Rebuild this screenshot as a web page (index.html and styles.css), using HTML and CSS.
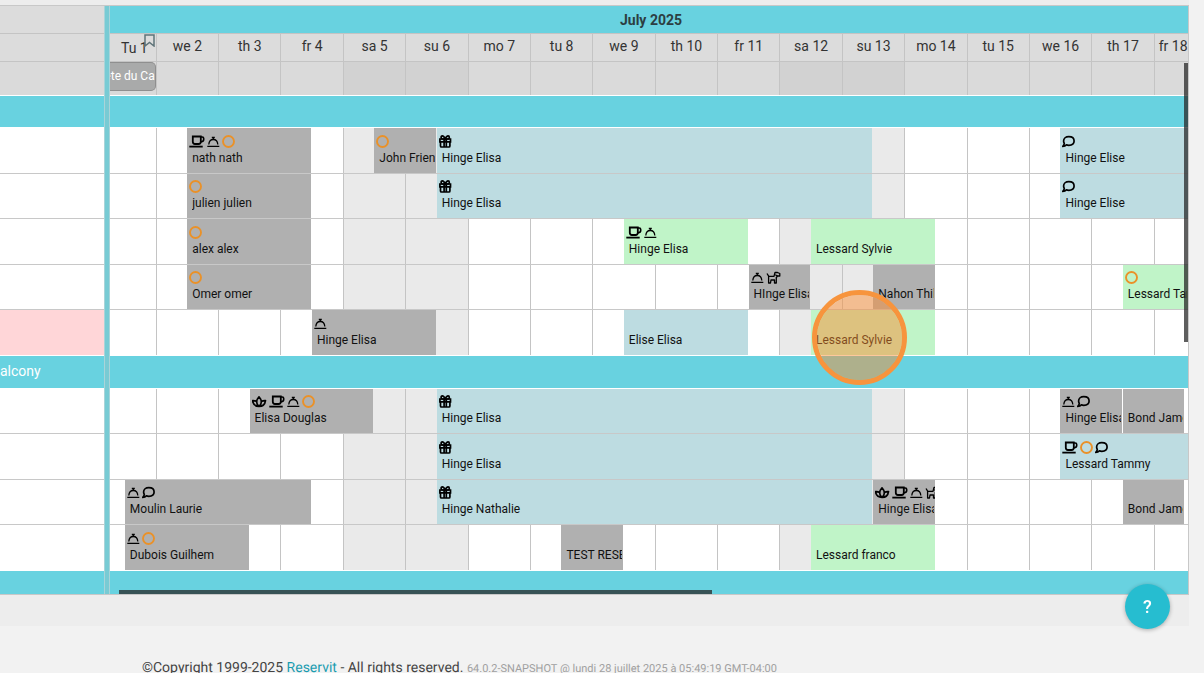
FILE: index.html
```html
<!DOCTYPE html>
<html lang="en">
<head>
<meta charset="utf-8">
<title>Reservit planning</title>
<link rel="stylesheet" href="styles.css">
</head>
<body>
<svg class="sprite" aria-hidden="true">
  <symbol id="cup" viewBox="0 0 16 13">
    <path d="M3.800 1.500H11.800V6.800Q11.800 9 9.600 9H6Q3.800 9 3.800 6.800Z" fill="none" stroke="currentColor" stroke-width="1.800"/>
    <path d="M12 2H13.200Q14.700 2 14.700 3.600V4.600Q14.700 6.600 12 6.900" fill="none" stroke="currentColor" stroke-width="1.600"/>
    <path d="M0.300 11.600H13.700" stroke="currentColor" stroke-width="1.800"/>
  </symbol>
  <symbol id="bell" viewBox="0 0 13 13">
    <path d="M1.800 9.500C2 6.500 4 4.500 6.300 4.500S10.600 6.500 10.800 9.500" fill="none" stroke="currentColor" stroke-width="1.300"/>
    <path d="M6.300 4.500V2.500M4.800 2.500H7.800M0.300 11.300H12.300" fill="none" stroke="currentColor" stroke-width="1.300"/>
  </symbol>
  <symbol id="ring" viewBox="0 0 13 13">
    <circle cx="6.500" cy="6.500" r="5.500" fill="none" stroke="#ea9128" stroke-width="1.900"/>
  </symbol>
  <symbol id="gift" viewBox="0 0 13 13">
    <path d="M.9 4H11.500V6.800H.9ZM1.500 6.800V11Q1.500 12 2.500 12H9.900Q10.900 12 10.900 11V6.800M5.100 4V12M7.300 4V12" fill="none" stroke="currentColor" stroke-width="1.700"/>
    <path d="M6.200 4C5.200 1.500 4.200 .9 3.300 .9C1.700 .9 1.700 3.800 3.300 4H9.100C10.700 3.800 10.700 .9 9.100 .9C8.200 .9 7.200 1.500 6.200 4Z" fill="none" stroke="currentColor" stroke-width="1.700"/>
  </symbol>
  <symbol id="chat" viewBox="0 0 13 13">
    <path d="M6.800 1.700C10 1.700 12.100 3.500 12.100 6S10 10.300 6.800 10.300C6 10.300 5.200 10.200 4.400 9.800Q3 11.300 .8 11.400Q2.200 10 2.300 8.400Q1.600 7.300 1.600 6C1.600 3.500 3.800 1.700 6.800 1.700Z" fill="none" stroke="currentColor" stroke-width="1.700" stroke-linejoin="round"/>
  </symbol>
  <symbol id="lotus" viewBox="1 0 15 13">
    <path d="M8 11.300C5 9.500 4.800 5 8 1.800C11.200 5 11 9.500 8 11.300ZM5.300 6.300Q3.500 5.300 1.500 5.600Q2.300 11.400 8 11.400Q13.700 11.400 14.500 5.600Q12.500 5.300 10.700 6.300" fill="none" stroke="currentColor" stroke-width="1.700" stroke-linejoin="round"/>
  </symbol>
  <symbol id="dog" viewBox="0 0 16 13">
    <path d="M1 2.500L2.800 5.300H8L9 1.500H11.500L13.800 2.500V5H11.500L10.300 6.500V12H8.500V9H5L4.500 12H2.600V5.300M9.300 3.700L11.500 5" fill="none" stroke="currentColor" stroke-width="1.300" stroke-linejoin="round"/>
  </symbol>
</svg>

<main class="panel">
  <div class="planner">
    <div class="sidebar">
      <div class="head-month"></div>
      <div class="head-days"></div>
      <div class="head-events"></div>
      <div class="group"></div>
      <div class="row tall"></div>
      <div class="row"></div>
      <div class="row tall"></div>
      <div class="row"></div>
      <div class="row tall last alert"></div>
      <div class="group high">alcony</div>
      <div class="row"></div>
      <div class="row tall"></div>
      <div class="row"></div>
      <div class="row tall last"></div>
      <div class="group short"></div>
    </div>
    <div class="splitter"></div>
    <div class="timeline">
      <div class="head-month">July 2025</div>
      <div class="head-days days">
        <div class="first">Tu 1<svg class="bookmark" viewBox="0 0 11 13" aria-hidden="true"><path d="M1 1H10V12L5.500 8.500L1 12Z"/></svg></div><div>we 2</div><div>th 3</div><div>fr 4</div><div>sa 5</div><div>su 6</div><div>mo 7</div><div>tu 8</div><div>we 9</div><div>th 10</div><div>fr 11</div><div>sa 12</div><div>su 13</div><div>mo 14</div><div>tu 15</div><div>we 16</div><div>th 17</div><div class="cut">fr 18</div>
      </div>
      <div class="head-events days">
        <div><div class="tag">ête du Ca</div></div><div></div><div></div><div></div><div class="we"></div><div class="we"></div><div></div><div></div><div></div><div></div><div></div><div class="we"></div><div class="we"></div><div></div><div></div><div></div><div></div><div></div>
      </div>
      <div class="body">
        <div class="backdrop days">
          <div></div><div></div><div></div><div></div><div class="we"></div><div class="we"></div><div></div><div></div><div></div><div></div><div></div><div class="we"></div><div class="we"></div><div></div><div></div><div></div><div></div><div></div>
        </div>
        <div class="group"></div>
        <div class="row tall">
          <button class="booking gray" style="grid-column:4/8"><span class="icons"><svg class="wide"><use href="#cup"/></svg><svg><use href="#bell"/></svg><svg><use href="#ring"/></svg></span><span class="name">nath nath</span></button>
          <button class="booking gray" style="grid-column:10/12"><span class="icons"><svg><use href="#ring"/></svg></span><span class="name">John Friend</span></button>
          <button class="booking blue" style="grid-column:12/26"><span class="icons"><svg><use href="#gift"/></svg></span><span class="name">Hinge Elisa</span></button>
          <button class="booking blue open" style="grid-column:32/37"><span class="icons"><svg><use href="#chat"/></svg></span><span class="name">Hinge Elise</span></button>
        </div>
        <div class="row">
          <button class="booking gray" style="grid-column:4/8"><span class="icons"><svg><use href="#ring"/></svg></span><span class="name">julien julien</span></button>
          <button class="booking blue" style="grid-column:12/26"><span class="icons"><svg><use href="#gift"/></svg></span><span class="name">Hinge Elisa</span></button>
          <button class="booking blue open" style="grid-column:32/37"><span class="icons"><svg><use href="#chat"/></svg></span><span class="name">Hinge Elise</span></button>
        </div>
        <div class="row tall">
          <button class="booking gray" style="grid-column:4/8"><span class="icons"><svg><use href="#ring"/></svg></span><span class="name">alex alex</span></button>
          <button class="booking green" style="grid-column:18/22"><span class="icons"><svg class="wide"><use href="#cup"/></svg><svg><use href="#bell"/></svg></span><span class="name">Hinge Elisa</span></button>
          <button class="booking green" style="grid-column:24/28"><span class="name">Lessard Sylvie</span></button>
        </div>
        <div class="row">
          <button class="booking gray" style="grid-column:4/8"><span class="icons"><svg><use href="#ring"/></svg></span><span class="name">Omer omer</span></button>
          <button class="booking gray" style="grid-column:22/24"><span class="icons"><svg><use href="#bell"/></svg><svg class="wide"><use href="#dog"/></svg></span><span class="name">HInge Elisa</span></button>
          <button class="booking gray" style="grid-column:26/28"><span class="name">Nahon Thil</span></button>
          <button class="booking green open" style="grid-column:34/37"><span class="icons"><svg><use href="#ring"/></svg></span><span class="name">Lessard Tammy</span></button>
        </div>
        <div class="row tall last">
          <button class="booking gray" style="grid-column:8/12"><span class="icons"><svg><use href="#bell"/></svg></span><span class="name">Hinge Elisa</span></button>
          <button class="booking blue" style="grid-column:18/22"><span class="name">Elise Elisa</span></button>
          <button class="booking green" style="grid-column:24/28"><span class="name">Lessard Sylvie</span></button>
        </div>
        <div class="group high"></div>
        <div class="row">
          <button class="booking gray" style="grid-column:6/10"><span class="icons"><svg class="medium"><use href="#lotus"/></svg><svg class="wide"><use href="#cup"/></svg><svg><use href="#bell"/></svg><svg><use href="#ring"/></svg></span><span class="name">Elisa Douglas</span></button>
          <button class="booking blue" style="grid-column:12/26"><span class="icons"><svg><use href="#gift"/></svg></span><span class="name">Hinge Elisa</span></button>
          <button class="booking gray" style="grid-column:32/34"><span class="icons"><svg><use href="#bell"/></svg><svg><use href="#chat"/></svg></span><span class="name">Hinge Elisa</span></button>
          <button class="booking gray" style="grid-column:34/36"><span class="name">Bond James</span></button>
        </div>
        <div class="row tall">
          <button class="booking blue" style="grid-column:12/26"><span class="icons"><svg><use href="#gift"/></svg></span><span class="name">Hinge Elisa</span></button>
          <button class="booking blue open" style="grid-column:32/37"><span class="icons"><svg class="wide"><use href="#cup"/></svg><svg><use href="#ring"/></svg><svg><use href="#chat"/></svg></span><span class="name">Lessard Tammy</span></button>
        </div>
        <div class="row">
          <button class="booking gray" style="grid-column:2/8"><span class="icons"><svg><use href="#bell"/></svg><svg><use href="#chat"/></svg></span><span class="name">Moulin Laurie</span></button>
          <button class="booking blue" style="grid-column:12/26"><span class="icons"><svg><use href="#gift"/></svg></span><span class="name">Hinge Nathalie</span></button>
          <button class="booking gray" style="grid-column:26/28"><span class="icons"><svg class="medium"><use href="#lotus"/></svg><svg class="wide"><use href="#cup"/></svg><svg><use href="#bell"/></svg><svg class="wide"><use href="#dog"/></svg></span><span class="name">Hinge Elisa</span></button>
          <button class="booking gray" style="grid-column:34/36"><span class="name">Bond James</span></button>
        </div>
        <div class="row tall last">
          <button class="booking gray" style="grid-column:2/6"><span class="icons"><svg><use href="#bell"/></svg><svg><use href="#ring"/></svg></span><span class="name">Dubois Guilhem</span></button>
          <button class="booking gray" style="grid-column:16/18"><span class="name">TEST RESERVIT</span></button>
          <button class="booking green" style="grid-column:24/28"><span class="name">Lessard franco</span></button>
        </div>
        <div class="group short"></div>
        <div class="marker"></div>
      </div>
      <div class="scroll-y"></div>
      <div class="scroll-x"></div>
    </div>
  </div>
</main>
<footer class="footer">©Copyright 1999-2025 <a href="#">Reservit</a> - All rights reserved. <small>64.0.2-SNAPSHOT @ lundi 28 juillet 2025 à 05:49:19 GMT-04:00</small></footer>
<button class="help" aria-label="Help">?</button>
</body>
</html>
```
FILE: styles.css
```css
* { box-sizing: border-box; }
html { scrollbar-width: none; }
body {
  margin: 0;
  background: #f2f2f2;
  color: #333;
  font: 14px/20px Roboto, "Liberation Sans", sans-serif;
}
.sprite { position: absolute; width: 0; height: 0; }
.panel { margin-right: 15px; padding: 5px 0 31px; background: #ededed; }
.planner {
  display: flex;
  border: 1px solid #c8c8c8;
  border-left: 0;
  background: #fff;
}
.sidebar { flex: none; width: 104px; }
.splitter {
  flex: none;
  width: 6px;
  border: 1px solid #a9d4d9;
  border-width: 0 1px;
  background: #78cbd4;
}
.timeline { position: relative; flex: 1; min-width: 0; }

/* Header bands */
.head-month {
  height: 28px;
  padding-left: 4px;
  border-bottom: 1px solid #c4c4c4;
  background: #68d2e0;
  color: #2c3e42;
  font-weight: 700;
  line-height: 28px;
  text-align: center;
}
.head-days { height: 28px; border-bottom: 1px solid #c4c4c4; background: #dcdcdc; }
.head-events { height: 34px; border-bottom: 1px solid #fff; background: #dadada; }
.sidebar .head-month { background: #dcdcdc; }

/* One column per day, clipped at both ends of the visible period */
.days {
  display: grid;
  grid-template-columns: minmax(0, 731fr) repeat(16, minmax(0, 998fr)) minmax(0, 549fr);
}
.days > div + div { border-left: 1px solid #c4c4c4; }
.head-days > div { line-height: 25px; text-align: center; white-space: nowrap; }
.head-days > .first { position: relative; padding-left: 3px; line-height: 28px; }
.head-days > .cut { padding-left: 4px; text-align: left; overflow: hidden; }
.head-events .we { background: #d2d2d2; }
.bookmark { position: absolute; top: 0; right: 1px; width: 11px; height: 13px; }
.bookmark path { fill: none; stroke: #5f7479; stroke-width: 1.5; }
.tag {
  display: flex;
  justify-content: flex-end;
  height: 29px;
  border: 1px solid #8f8f8f;
  border-left: 0;
  border-radius: 0 5px 5px 0;
  background: #a9aaaa;
  color: #fff;
  font-size: 12px;
  line-height: 27px;
  white-space: nowrap;
  overflow: hidden;
}

/* Rooms and bookings */
.body { position: relative; }
.backdrop { position: absolute; inset: 0; }
.backdrop .we { background: #eaeaea; }
.group {
  position: relative;
  height: 32px;
  border-bottom: 1px solid #fff;
  background: #68d2e0;
  color: #fff;
  line-height: 30px;
}
.group.high { height: 33px; }
.group.short { height: 23px; border: 0; }
.row {
  position: relative;
  display: grid;
  grid-template-columns: minmax(0, 237fr) repeat(34, minmax(0, 499fr)) minmax(0, 45fr);
  height: 45px;
  border-bottom: 1px solid #c8c8c8;
}
.row.tall { height: 46px; }
.row.last { border-color: #fff; }
.row.alert { background: #ffd6d8; }
.booking {
  grid-row: 1;
  display: flex;
  flex-direction: column;
  justify-content: flex-end;
  gap: 3px;
  min-width: 0;
  margin: 0 1px 0 0;
  padding: 0 0 7px;
  border: 0;
  color: #111;
  font: 12px/15px Roboto, "Liberation Sans", sans-serif;
  text-align: left;
  white-space: nowrap;
  overflow: hidden;
}
.booking.open { margin-right: 0; }
.gray { background: #b0b0b0; }
.blue { background: #bddce1; }
.green { background: #c0f4c8; }
.icons { display: flex; gap: 2px; padding-left: 2px; color: #000; }
.icons svg { flex: none; width: 13px; height: 13px; }
.icons .medium { width: 15px; }
.icons .wide { width: 16px; }
.name { margin: 0 1px 0 5px; overflow: hidden; }

/* Overlays */
.marker {
  position: absolute;
  top: 194px;
  left: 702px;
  width: 95px;
  height: 95px;
  border: 5px solid #f7943d;
  border-radius: 50%;
  background: rgba(253, 138, 45, .47);
  background-clip: padding-box;
}
.scroll-y {
  position: absolute;
  top: 57px;
  right: 0;
  width: 4px;
  height: 279px;
  background: rgba(40, 40, 40, .75);
}
.scroll-x {
  position: absolute;
  bottom: 0;
  left: 9px;
  width: 55%;
  height: 4px;
  background: rgba(40, 40, 40, .75);
}
.footer { padding: 32px 142px 0; color: #444; text-rendering: geometricPrecision; }
.footer a { color: #1a9cb0; text-decoration: none; }
.footer small { color: #a0a0a0; font-size: 11px; }
.help {
  position: fixed;
  right: 34px;
  bottom: 44px;
  width: 45px;
  height: 45px;
  padding: 0;
  border: 0;
  border-radius: 50%;
  background: #26bdd0;
  box-shadow: 0 1px 4px rgba(0, 0, 0, .3);
  color: #fff;
  font: 500 18px/43px Roboto, "Liberation Sans", sans-serif;
}
```
